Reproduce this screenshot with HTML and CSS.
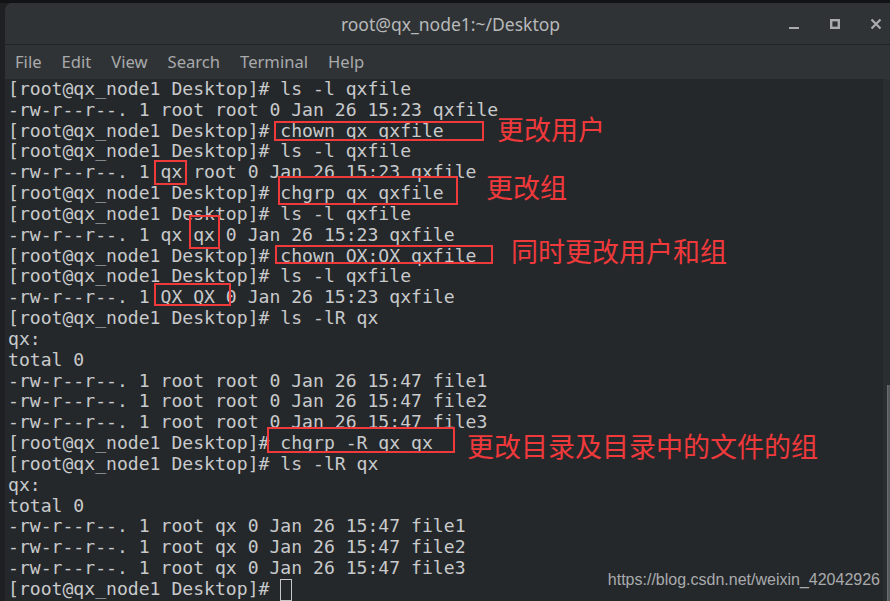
FILE: index.html
```html
<!DOCTYPE html>
<html lang="zh-CN">
<head>
    <meta charset="UTF-8">
    <title>root@qx_node1:~/Desktop</title>
    <link rel="stylesheet" href="styles.css">
</head>
<body>
<div class="screen">
    <div class="desk-strip"></div>
    <div class="window">
        <div class="titlebar">
            <div></div>
            <div class="title">root@qx_node1:~/Desktop</div>
            <div class="controls">
                <svg width="12" height="12" viewBox="0 0 12 12"><line x1="1" y1="10" x2="11" y2="10" stroke="#a9abac" stroke-width="2"/></svg>
                <svg width="12" height="12" viewBox="0 0 12 12"><rect x="2.2" y="2.2" width="7.6" height="7.6" fill="none" stroke="#a9abac" stroke-width="2.4"/></svg>
                <svg width="12" height="12" viewBox="0 0 12 12"><path d="M1.5 1.5 L10.5 10.5 M10.5 1.5 L1.5 10.5" stroke="#a9abac" stroke-width="2.2"/></svg>
            </div>
        </div>
        <div class="menubar">
            <span>File</span>
            <span>Edit</span>
            <span>View</span>
            <span>Search</span>
            <span>Terminal</span>
            <span>Help</span>
        </div>
        <div class="term-wrap">
<pre class="term">[root@qx_node1 Desktop]# ls -l qxfile
-rw-r--r--. 1 root root 0 Jan 26 15:23 qxfile
[root@qx_node1 Desktop]# chown qx qxfile
[root@qx_node1 Desktop]# ls -l qxfile
-rw-r--r--. 1 qx root 0 Jan 26 15:23 qxfile
[root@qx_node1 Desktop]# chgrp qx qxfile
[root@qx_node1 Desktop]# ls -l qxfile
-rw-r--r--. 1 qx qx 0 Jan 26 15:23 qxfile
[root@qx_node1 Desktop]# chown QX:QX qxfile
[root@qx_node1 Desktop]# ls -l qxfile
-rw-r--r--. 1 QX QX 0 Jan 26 15:23 qxfile
[root@qx_node1 Desktop]# ls -lR qx
qx:
total 0
-rw-r--r--. 1 root root 0 Jan 26 15:47 file1
-rw-r--r--. 1 root root 0 Jan 26 15:47 file2
-rw-r--r--. 1 root root 0 Jan 26 15:47 file3
[root@qx_node1 Desktop]# chgrp -R qx qx
[root@qx_node1 Desktop]# ls -lR qx
qx:
total 0
-rw-r--r--. 1 root qx 0 Jan 26 15:47 file1
-rw-r--r--. 1 root qx 0 Jan 26 15:47 file2
-rw-r--r--. 1 root qx 0 Jan 26 15:47 file3
[root@qx_node1 Desktop]# <span class="cursor"></span></pre>
            <div class="scrollbar"><div class="thumb"></div></div>
        </div>
    </div>

    <!-- 标注框 -->
    <div class="mark mark-1"></div>
    <div class="mark mark-2"></div>
    <div class="mark mark-3"></div>
    <div class="mark mark-4"></div>
    <div class="mark mark-5"></div>
    <div class="mark mark-6"></div>
    <div class="mark mark-7"></div>

    <div class="note note-1">更改用户</div>
    <div class="note note-2">更改组</div>
    <div class="note note-3">同时更改用户和组</div>
    <div class="note note-4">更改目录及目录中的文件的组</div>

    <div class="watermark">https://blog.csdn.net/weixin_42042926</div>
</div>
</body>
</html>
```

FILE: styles.css
```css
html{
    height: 100%;
}
body{
    height: 100%;
    margin: 0;
    padding: 0;
    background-color: #1c1e20;
    overflow: hidden;
}
.screen{
    position: relative;
    width: 890px;
    height: 601px;
    overflow: hidden;
    background-color: #1e2022;
}
.desk-strip{
    height: 3px;
    background-color: #121314;
}
.window{
    margin-left: 5px;
    border-radius: 7px 0 0 0;
    overflow: hidden;
    background-color: #25282b;
}
.titlebar{
    display: grid;
    grid-template-columns: 1fr auto 1fr;
    align-items: center;
    height: 41px;
    padding: 0 8px 0 14px;
    background-color: #303336;
    border-bottom: 1px solid #222426;
}
.title{
    font-family: "Noto Sans", sans-serif;
    font-size: 17.5px;
    color: #b7b9ba;
}
.controls{
    display: flex;
    justify-content: flex-end;
    align-items: center;
    gap: 29px;
}
.menubar{
    display: flex;
    align-items: center;
    gap: 20px;
    height: 34px;
    padding: 0 0 2px 10px;
    box-sizing: border-box;
    background-color: #303336;
    font-family: "Noto Sans", sans-serif;
    font-size: 16.6px;
    color: #a8aaab;
}
.term-wrap{
    display: flex;
    height: 522px;
}
.term{
    flex: 1;
    margin: 0;
    padding: 0 0 0 3px;
    font-family: "DejaVu Sans Mono", monospace;
    font-size: 18.1px;
    line-height: 20.83px;
    color: #c8cacb;
}
.cursor{
    display: inline-block;
    box-sizing: border-box;
    width: 12px;
    height: 22px;
    vertical-align: -6px;
    border: 1px solid #c4c6c7;
}
.scrollbar{
    display: flex;
    flex-direction: column;
    width: 7px;
    padding-top: 306px;
    box-sizing: border-box;
    background-color: #2b2e31;
}
.thumb{
    flex: 1;
    margin-left: 4px;
    background-color: #57595c;
    border-left: 1px solid #6a6c6f;
}
.mark{
    position: absolute;
    box-sizing: border-box;
    border: 2px solid #f0393b;
}
.mark-1{ left: 274px; top: 121px; width: 210px; height: 20px; }
.mark-2{ left: 154px; top: 160px; width: 33px; height: 25px; }
.mark-3{ left: 278px; top: 176px; width: 180px; height: 29px; }
.mark-4{ left: 189px; top: 215px; width: 31px; height: 34px; }
.mark-5{ left: 275px; top: 245px; width: 218px; height: 19px; }
.mark-6{ left: 154px; top: 283px; width: 77px; height: 23px; }
.mark-7{ left: 267px; top: 427px; width: 188px; height: 26px; }
.note{
    position: absolute;
    font-family: "Noto Sans CJK SC", sans-serif;
    font-size: 27px;
    line-height: 27px;
    color: #f0393b;
    white-space: nowrap;
}
.note-1{ left: 497px; top: 115px; }
.note-2{ left: 486px; top: 173px; }
.note-3{ left: 511px; top: 237px; }
.note-4{ left: 467px; top: 432px; }
.watermark{
    position: absolute;
    right: 10px;
    top: 572px;
    font-family: "Liberation Sans", Arial, sans-serif;
    font-size: 16px;
    line-height: 16px;
    color: #a9abad;
}
```
